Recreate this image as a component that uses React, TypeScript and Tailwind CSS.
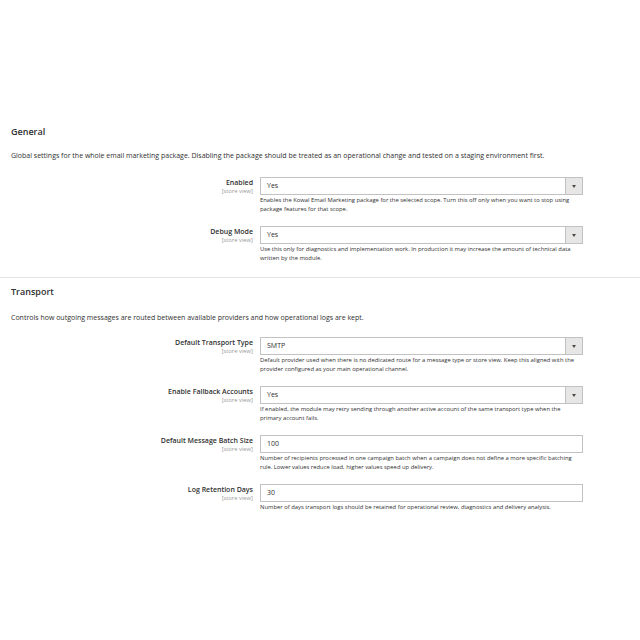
import type { FC } from 'react'

type Field = {
  label: string
  value: string
  kind: 'select' | 'text'
  note: string
}

type Section = {
  title: string
  description: string
  fields: Field[]
}

const SECTIONS: Section[] = [
  {
    title: 'General',
    description:
      'Global settings for the whole email marketing package. Disabling the package should be treated as an operational change and tested on a staging environment first.',
    fields: [
      {
        label: 'Enabled',
        value: 'Yes',
        kind: 'select',
        note: 'Enables the Kowal Email Marketing package for the selected scope. Turn this off only when you want to stop using package features for that scope.'
      },
      {
        label: 'Debug Mode',
        value: 'Yes',
        kind: 'select',
        note: 'Use this only for diagnostics and implementation work. In production it may increase the amount of technical data written by the module.'
      }
    ]
  },
  {
    title: 'Transport',
    description:
      'Controls how outgoing messages are routed between available providers and how operational logs are kept.',
    fields: [
      {
        label: 'Default Transport Type',
        value: 'SMTP',
        kind: 'select',
        note: 'Default provider used when there is no dedicated route for a message type or store view. Keep this aligned with the provider configured as your main operational channel.'
      },
      {
        label: 'Enable Fallback Accounts',
        value: 'Yes',
        kind: 'select',
        note: 'If enabled, the module may retry sending through another active account of the same transport type when the primary account fails.'
      },
      {
        label: 'Default Message Batch Size',
        value: '100',
        kind: 'text',
        note: 'Number of recipients processed in one campaign batch when a campaign does not define a more specific batching rule. Lower values reduce load, higher values speed up delivery.'
      },
      {
        label: 'Log Retention Days',
        value: '30',
        kind: 'text',
        note: 'Number of days transport logs should be retained for operational review, diagnostics and delivery analysis.'
      }
    ]
  }
]

const FieldRow: FC<{ field: Field }> = ({ field }) => (
  <div className="flex items-start gap-[7px]">
    <div className="w-[242px] shrink-0 pt-[1px] text-right">
      <div className="text-[7px] font-semibold leading-[10px] text-[#303030]">{field.label}</div>
      <div className="text-[5.8px] leading-[6px] text-[#9a9a9a]">[store view]</div>
    </div>
    <div className="w-[323px] shrink-0">
      <div className="flex h-[18px] items-stretch border border-[#c2c2c2] bg-white">
        <div className="flex flex-1 items-center pl-[6px] text-[7px] text-[#303030]">{field.value}</div>
        {field.kind === 'select' && (
          <div className="flex w-[17px] items-center justify-center border-l border-[#c2c2c2] bg-[#e6e6e6]">
            <svg width="4" height="3" viewBox="0 0 4 3">
              <path d="M0 0h4L2 3z" fill="#514943" />
            </svg>
          </div>
        )}
      </div>
      <p className="mt-[1px] text-[5.85px] leading-[9px] text-[#303030]">{field.note}</p>
    </div>
  </div>
)

export default function App() {
  return (
    <div
      className="min-h-[640px] w-[640px] bg-white pt-[125px] text-[#303030]"
      style={{ fontFamily: '"Open Sans", "Liberation Sans", sans-serif' }}
    >
      {SECTIONS.map((section, i) => (
        <section key={section.title} className={i > 0 ? 'mt-[14px] border-t border-[#e3e3e3] pt-[7px]' : ''}>
          <h2 className="px-[11px] text-[9px] font-semibold leading-[14px] text-[#303030]">{section.title}</h2>
          <p className={`${i > 0 ? 'mt-[14px]' : 'mt-[12px]'} px-[11px] text-[7px] leading-[10px]`}>
            {section.description}
          </p>
          <div className={`${i > 0 ? 'mt-[14px]' : 'mt-[16px]'} flex flex-col gap-[12px] pl-[11px]`}>
            {section.fields.map((field) => (
              <FieldRow key={field.label} field={field} />
            ))}
          </div>
        </section>
      ))}
    </div>
  )
}
